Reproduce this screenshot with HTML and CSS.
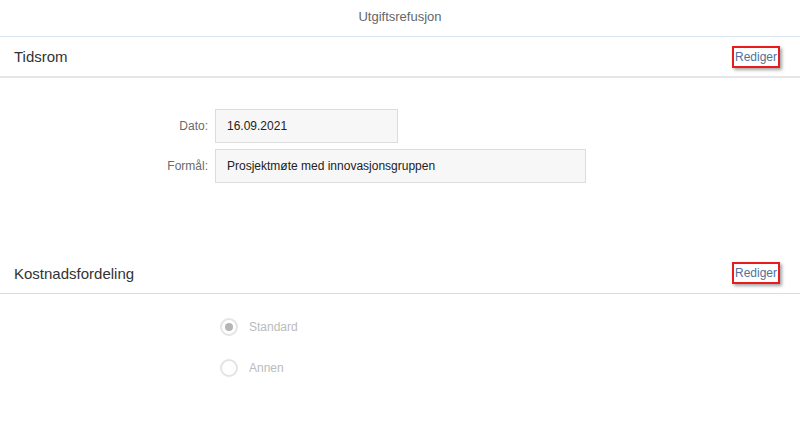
FILE: index.html
```html
<!DOCTYPE html>
<html lang="no">
<head>
  <meta charset="UTF-8">
  <meta name="viewport" content="width=device-width, initial-scale=1.0">
  <title>Utgiftsrefusjon</title>
  <link rel="stylesheet" href="styles.css">
</head>
<body>
  <div class="topbar">Utgiftsrefusjon</div>

  <div class="section">
    <div class="section-head">
      <span class="section-title">Tidsrom</span>
      <a class="edit" href="#">Rediger</a>
    </div>
    <div class="form">
      <label class="form-label">Dato:</label>
      <div class="field field-short">16.09.2021</div>
      <label class="form-label">Formål:</label>
      <div class="field field-long">Prosjektmøte med innovasjonsgruppen</div>
    </div>
  </div>

  <div class="section">
    <div class="section-head">
      <span class="section-title">Kostnadsfordeling</span>
      <a class="edit" href="#">Rediger</a>
    </div>
    <div class="radios">
      <div class="radio-row">
        <span class="radio checked"></span>
        <span class="radio-label">Standard</span>
      </div>
      <div class="radio-row">
        <span class="radio"></span>
        <span class="radio-label">Annen</span>
      </div>
    </div>
  </div>
</body>
</html>
```

FILE: styles.css
```css
body {
  margin: 0;
  padding: 0;
  font-family: "Liberation Sans", Arial, sans-serif;
  background-color: #fff;
  color: #333;
}
.topbar {
  height: 36px;
  line-height: 34px;
  text-align: center;
  font-size: 13px;
  color: #666;
  border-bottom: 1px solid #dae6f0;
}
.section-head {
  height: 39px;
  padding: 0 20px 0 14px;
  display: flex;
  align-items: center;
  justify-content: space-between;
  border-bottom: 2px solid #e6e6e6;
}
.section + .section .section-head {
  height: 40px;
  border-bottom-width: 1px;
  border-bottom-color: #dcdcdc;
}
.section-title {
  font-size: 15px;
  color: #333;
}
.edit {
  font-size: 12px;
  color: #50729a;
  text-decoration: none;
  border: 2px solid #e81c1c;
  padding: 2px 1px 2px 1px;
  box-shadow: 2px 2px 3px rgba(0, 0, 0, 0.35);
}
.form {
  display: grid;
  grid-template-columns: 208px auto;
  column-gap: 7px;
  row-gap: 6px;
  padding: 31px 0 70px 0;
  align-items: center;
}
.form-label {
  text-align: right;
  font-size: 12px;
  color: #6a6a6a;
}
.field {
  box-sizing: border-box;
  height: 34px;
  line-height: 32px;
  padding-left: 11px;
  font-size: 12px;
  color: #222;
  background-color: #f7f7f7;
  border: 1px solid #dcdcdc;
}
.field-short {
  width: 183px;
}
.field-long {
  width: 371px;
}
.radios {
  padding: 24px 0 0 220px;
  display: flex;
  flex-direction: column;
  gap: 23px;
}
.radio-row {
  display: flex;
  align-items: center;
  gap: 11px;
  height: 18px;
}
.radio {
  box-sizing: border-box;
  width: 18px;
  height: 18px;
  border: 2px solid #e4e4e4;
  border-radius: 50%;
  display: flex;
  align-items: center;
  justify-content: center;
}
.radio.checked::after {
  content: "";
  width: 8px;
  height: 8px;
  border-radius: 50%;
  background-color: #b5b5b5;
}
.radio-label {
  font-size: 12px;
  color: #bbb;
}
```
